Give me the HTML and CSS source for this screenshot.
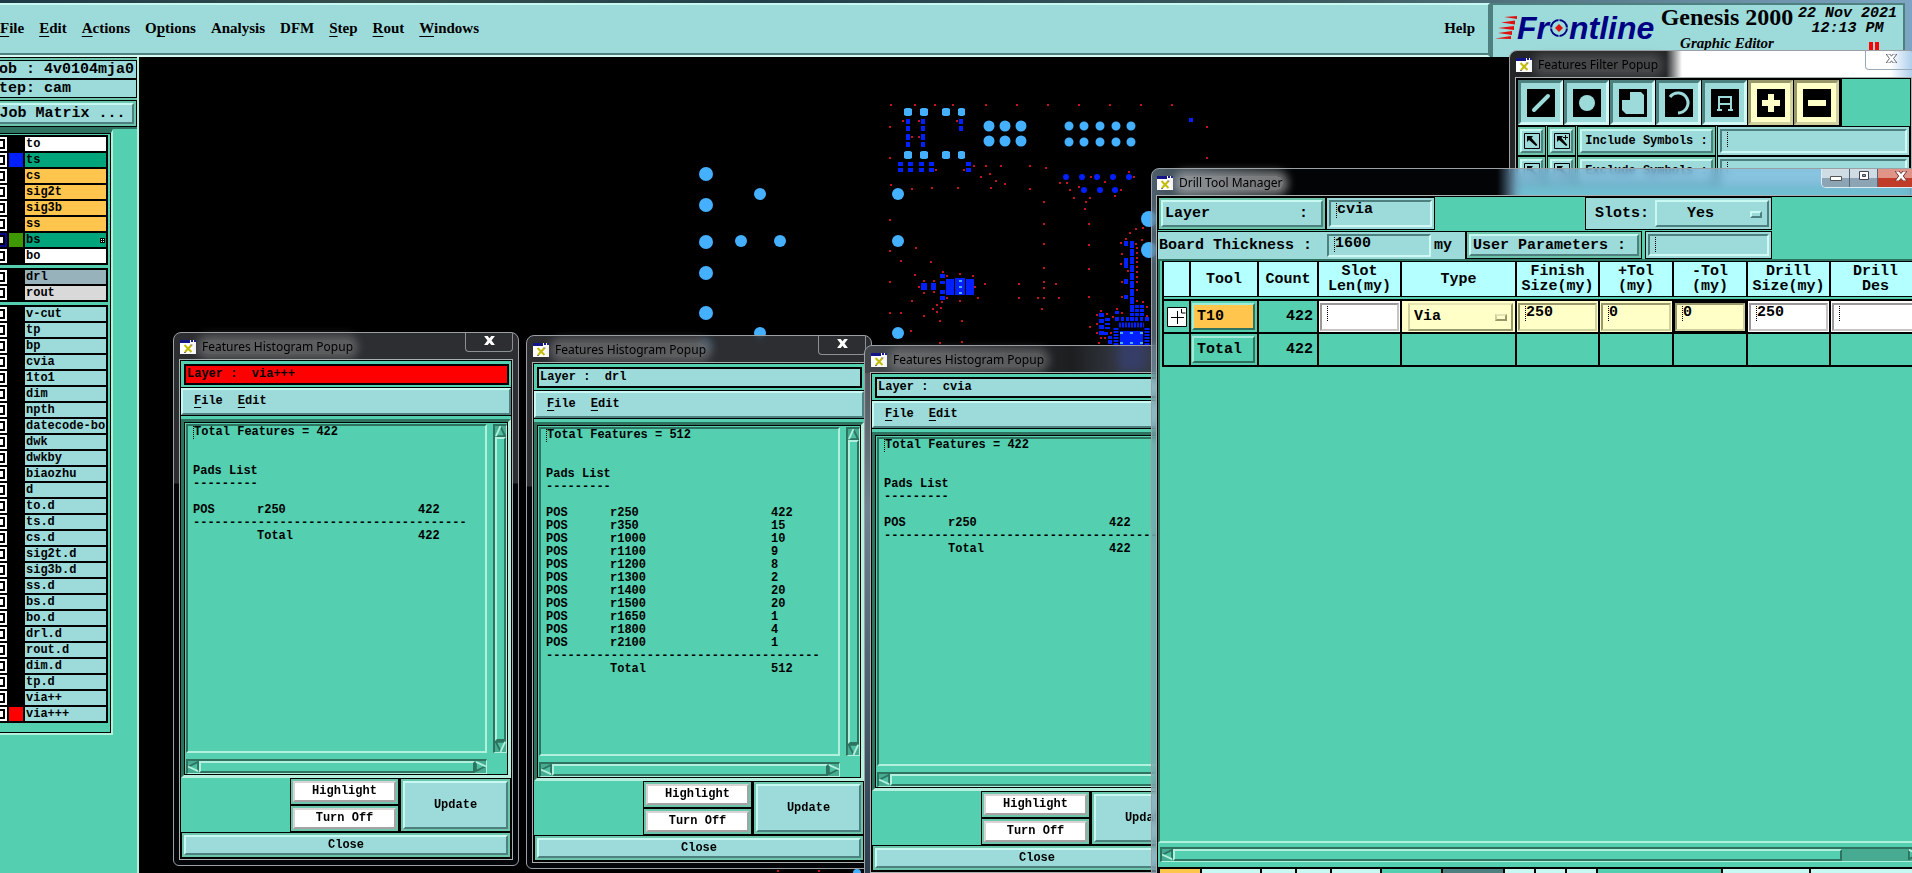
FILE: index.html
```html
<!DOCTYPE html>
<html lang="en">
<head>
    <meta charset="UTF-8">
    <title>Genesis 2000 - Graphic Editor</title>
    <link rel="stylesheet" href="styles.css">
</head>
<body>
    <!-- shared symbols -->
    <svg class="defs" aria-hidden="true">
        <symbol id="xicon" viewBox="0 0 16 14">
            <rect width="16" height="14" fill="#fff"/>
            <rect width="10" height="3" fill="#15158a"/>
            <rect x="11" width="2" height="2" fill="#15158a"/>
            <rect x="14" width="2" height="2" fill="#15158a"/>
            <path d="M4.500 5l7 7M11.500 5L5 12" fill="none" stroke="#c4bc08" stroke-width="2"/>
            <path d="M10.500 5h2M4 12.500h2" stroke="#777" stroke-width="1"/>
        </symbol>
        <symbol id="xclose" viewBox="0 0 12 10">
            <path d="M0 0h4l2 2.500 2-2.500h4L8.300 5 12 10H8L6 7.500 4 10H0l3.700-5z"/>
        </symbol>
        <symbol id="arrow" viewBox="0 0 12 12">
            <path d="M6 0L11 11H1z" fill="#4fbfa1"/>
            <path d="M1 11h10L6 1" fill="none" stroke="#2d7360" stroke-width="2"/>
            <path d="M6 0L1 11" stroke="#b0f0dc" stroke-width="2"/>
        </symbol>
        <symbol id="pick" viewBox="0 0 16 16">
            <path d="M.5.5h15v15H.5z" fill="none" stroke="#000"/>
            <path d="M3 3h6L7.500 5l6 7-1.500 1-7-6-2 2z"/>
        </symbol>
    </svg>

    <header class="topbar">
        <nav class="menubar">
            <button><u>F</u>ile</button>
            <button><u>E</u>dit</button>
            <button><u>A</u>ctions</button>
            <button>O<u>p</u>tions</button>
            <button>Analysis</button>
            <button>DFM</button>
            <button><u>S</u>tep</button>
            <button><u>R</u>out</button>
            <button><u>W</u>indows</button>
            <button class="help">Help</button>
        </nav>
        <div class="brand">
            <div class="logo">
                <svg class="speed" width="22" height="24" viewBox="0 0 22 24" fill="#e01010">
                    <path d="M9 1L22 0v3zM6 6.500L20 4.500v4zM3 12L19 10v4zM3 17L17 15v4zM0 22.500L16 20v3z"/>
                </svg>
                <span>Fr</span>
                <svg width="20" height="20" viewBox="0 0 20 20">
                    <circle cx="10" cy="10" r="8" fill="none" stroke="#000084" stroke-width="2"/>
                    <path d="M10 6l4 4-4 4-4-4z" fill="#e01010"/>
                    <path d="M10 0v4M10 16v4M0 10h3M17 10h3" stroke="#9ddbdb"/>
                </svg>
                <span>ntline</span>
            </div>
            <div class="product">
                <h1>Genesis 2000</h1>
                <p>Graphic Editor</p>
            </div>
            <div class="clock">
                <p>22 Nov 2021</p>
                <p>12:13 PM</p>
                <div class="pause"></div>
            </div>
        </div>
    </header>

    <main class="workspace">
        <aside class="sidebar">
            <div class="job">
                <p class="job-line">Job : 4v0104mja0</p>
                <p class="job-line">Step: cam</p>
                <div class="cell"><button class="btn">Job Matrix ...</button></div>
            </div>
            <div class="layers">
                <div class="group">
                    <label class="row"><input type="checkbox"><i></i><span class="white">to</span></label>
                    <label class="row"><input type="checkbox"><i class="blue"></i><span class="green">ts</span></label>
                    <label class="row"><input type="checkbox"><i></i><span class="orange">cs</span></label>
                    <label class="row"><input type="checkbox"><i></i><span class="orange">sig2t</span></label>
                    <label class="row"><input type="checkbox"><i></i><span class="orange">sig3b</span></label>
                    <label class="row"><input type="checkbox"><i></i><span class="orange">ss</span></label>
                    <label class="row"><input type="checkbox" checked><i class="olive"></i><span class="green">bs<svg class="grid-mark" viewBox="0 0 5 5"><path d="M0 0h5v5H0z"/><path d="M1 1h1v1H1zM3 1h1v1H3zM1 3h1v1H1zM3 3h1v1H3z" fill="#fff"/></svg></span></label>
                    <label class="row"><input type="checkbox"><i></i><span class="white">bo</span></label>
                </div>
                <div class="group">
                    <label class="row"><input type="checkbox"><i></i><span class="slate">drl</span></label>
                    <label class="row"><input type="checkbox"><i></i><span class="grey">rout</span></label>
                </div>
                <div class="group">
                    <label class="row"><input type="checkbox"><i></i><span>v-cut</span></label>
                    <label class="row"><input type="checkbox"><i></i><span>tp</span></label>
                    <label class="row"><input type="checkbox"><i></i><span>bp</span></label>
                    <label class="row"><input type="checkbox"><i></i><span>cvia</span></label>
                    <label class="row"><input type="checkbox"><i></i><span>1to1</span></label>
                    <label class="row"><input type="checkbox"><i></i><span>dim</span></label>
                    <label class="row"><input type="checkbox"><i></i><span>npth</span></label>
                    <label class="row"><input type="checkbox"><i></i><span>datecode-bo</span></label>
                    <label class="row"><input type="checkbox"><i></i><span>dwk</span></label>
                    <label class="row"><input type="checkbox"><i></i><span>dwkby</span></label>
                    <label class="row"><input type="checkbox"><i></i><span>biaozhu</span></label>
                    <label class="row"><input type="checkbox"><i></i><span>d</span></label>
                    <label class="row"><input type="checkbox"><i></i><span>to.d</span></label>
                    <label class="row"><input type="checkbox"><i></i><span>ts.d</span></label>
                    <label class="row"><input type="checkbox"><i></i><span>cs.d</span></label>
                    <label class="row"><input type="checkbox"><i></i><span>sig2t.d</span></label>
                    <label class="row"><input type="checkbox"><i></i><span>sig3b.d</span></label>
                    <label class="row"><input type="checkbox"><i></i><span>ss.d</span></label>
                    <label class="row"><input type="checkbox"><i></i><span>bs.d</span></label>
                    <label class="row"><input type="checkbox"><i></i><span>bo.d</span></label>
                    <label class="row"><input type="checkbox"><i></i><span>drl.d</span></label>
                    <label class="row"><input type="checkbox"><i></i><span>rout.d</span></label>
                    <label class="row"><input type="checkbox"><i></i><span>dim.d</span></label>
                    <label class="row"><input type="checkbox"><i></i><span>tp.d</span></label>
                    <label class="row"><input type="checkbox"><i></i><span>via++</span></label>
                    <label class="row"><input type="checkbox"><i class="red"></i><span>via+++</span></label>
                </div>
            </div>
        </aside>

        <svg class="board">
            <g transform="translate(-139 -57)">
                <!-- large holes -->
                <g fill="#44b0ff">
                    <circle cx="706" cy="174" r="7"/><circle cx="706" cy="205" r="7"/><circle cx="706" cy="242" r="7"/>
                    <circle cx="706" cy="273" r="7"/><circle cx="706" cy="313" r="7"/><circle cx="706" cy="345" r="7"/>
                    <circle cx="760" cy="194" r="6"/><circle cx="741" cy="241" r="6"/><circle cx="780" cy="241" r="6"/>
                    <circle cx="760" cy="333" r="6"/><circle cx="898" cy="194" r="6"/><circle cx="898" cy="241" r="6"/>
                    <circle cx="898" cy="333" r="6"/><circle cx="1149" cy="219" r="8"/><circle cx="1149" cy="250" r="8"/>
                    <circle cx="857" cy="873" r="4"/>
                </g>
                <path fill="#44b0ff" d="M904 109l2-1h4l2 1v6l-2 1h-4l-2-1zM920 109l2-1h4l2 1v6l-2 1h-4l-2-1zM942 109l2-1h4l2 1v6l-2 1h-4l-2-1zM958 109l2-1h3l2 1v6l-2 1h-3l-2-1zM904 152l2-1h4l2 1v6l-2 1h-4l-2-1zM920 152l2-1h4l2 1v6l-2 1h-4l-2-1zM942 152l2-1h4l2 1v6l-2 1h-4l-2-1zM958 152l2-1h3l2 1v6l-2 1h-3l-2-1z"/>
                <g stroke="#44b0ff" stroke-linecap="round">
                    <path stroke-width="11" d="M989 126h0M1005 126h0M1021 126h0M989 141h0M1005 141h0M1021 141h0"/>
                    <path stroke-width="9" d="M1069 126h0M1084 126h0M1100 126h0M1116 126h0M1131 126h0M1069 142h0M1084 142h0M1100 142h0M1116 142h0M1131 142h0"/>
                </g>
                <!-- slots and pads -->
                <g stroke="#0020ff" stroke-linecap="round" stroke-width="6">
                    <path d="M1066 177h0M1082 177h0M1097 177h0M1113 177h0M1129 177h0M1084 190h0M1100 190h0M1115 190h0"/>
                </g>
                <g fill="#0020ff">
                    <path d="M906 119h4v5h-4zM906 126h4v5h-4zM906 134h4v6h-4zM906 142h4v5h-4zM921 119h4v5h-4zM921 126h4v5h-4zM921 134h4v6h-4zM921 142h4v5h-4zM959 119h4v5h-4zM959 126h4v5h-4z"/>
                    <path d="M898 162h5v4h-5zM908 162h5v4h-5zM919 162h5v4h-5zM929 162h5v4h-5zM966 162h5v4h-5zM898 168h5v4h-5zM908 168h5v4h-5zM919 168h5v4h-5zM929 168h5v4h-5zM966 168h5v4h-5zM1189 118h4v4h-4z"/>
                    <path d="M921 283h6v7h-6zM931 283h5v7h-5zM940 274h5v4h-5zM940 281h5v3h-5zM940 290h5v4h-5zM940 296h5v4h-5zM946 279h8v16h-8zM955 278h10v17h-10zM966 279h8v16h-8z"/>
                    <path d="M1124 241h4v5h-4zM1124 258h4v10h-4zM1124 279h4v5h-4zM1124 295h4v4h-4z"/>
                    <path d="M1135 305h4v3h-4zM1140 305h4v3h-4zM1135 309h4v3h-4zM1140 309h4v3h-4zM1135 313h4v3h-4zM1140 313h4v3h-4zM1115 311h4v3h-4z"/>
                    <path d="M1115 317h4v4h-4zM1121 317h3v4h-3zM1126 317h3v4h-3zM1130 317h4v4h-4zM1135 317h3v4h-3zM1140 317h3v4h-3zM1145 317h4v4h-4z"/>
                    <path d="M1099 313h5v4h-5zM1099 319h5v4h-5zM1099 325h5v4h-5zM1099 331h5v4h-5zM1105 318h5v3h-5zM1105 323h5v2h-5zM1105 327h5v2h-5zM1108 336h4v3h-4zM1108 340h4v4h-4zM1104 332h4v3h-4z"/>
                    <path d="M1120 331h23v40h-23z"/>
                </g>
                <g stroke="#0020ff" fill="none">
                    <path stroke-width="4" stroke-dasharray="7 1" d="M1132 241v75"/>
                    <path stroke-width="5" stroke-dasharray="2 1" d="M1119 325h25"/>
                    <path stroke-width="5" stroke-dasharray="2 1" d="M1116 328v40M1147 328v40"/>
                </g>
                <path fill="#44b0ff" d="M959 280h3v2h-3zM959 286h3v2h-3zM959 292h3v2h-3zM1120 332h3v2h-3zM1130 332h3v2h-3zM1140 332h3v2h-3zM1120 342h3v2h-3zM1130 342h3v2h-3zM1140 342h3v2h-3z"/>
                <!-- vias -->
                <path stroke="#c81420" stroke-width="2" d="M890 105h2M914 105h2M934 105h2M952 105h2M985 105h2M1016 105h2M1047 105h2M1078 105h2M1109 105h2M1140 105h2M1171 105h2
                    M902 121h2M918 121h2M956 121h2M889 127h2M911 137h2M918 137h2M1206 127h2M889 158h2M1206 158h2M935 170h2M963 170h2M973 166h2M985 166h2M1000 166h2M1029 166h2M1045 168h2
                    M980 177h2M989 174h2M995 181h2M1004 184h2M990 188h2M957 188h2M931 188h2M911 189h2M890 185h2M1029 189h2M889 220h2M1043 202h2M1043 224h2M1043 244h2M1043 268h2
                    M889 251h2M915 248h2M900 261h2M930 262h2M914 275h2M889 282h2M942 272h2M959 274h2M972 276h2M946 276h2M923 281h2M933 281h2M918 287h2M974 287h2M984 284h2M1018 284h2M1043 282h2M1055 284h2M1043 288h2
                    M977 298h2M1018 298h2M1037 298h2M1043 298h2M1058 298h2M1041 309h2M911 301h2M923 293h2M933 292h2M946 298h2M959 301h2M941 302h2M936 305h2M940 308h2M932 309h2M936 312h2M923 316h2M889 313h2M900 313h2
                    M939 321h2M961 321h2M910 331h2M939 343h2M961 342h2M1128 172h2M1133 177h2M1090 177h2M1059 183h2M1066 183h2M1104 182h2M1069 190h2M1078 187h2M1120 190h2M1073 198h2M1089 198h2M1114 196h2M1085 202h2M1084 209h2
                    M1088 224h2M1088 245h2M1088 269h2M1088 297h2M1142 228h2M1135 229h2M1129 233h2M1120 243h2M1125 239h2M1135 244h2M1141 240h2M1136 248h2M1121 254h2M1136 253h2M1136 258h2M1136 262h2M1120 264h2M1127 271h2M1136 267h2
                    M1136 272h2M1136 277h2M1121 282h2M1136 282h2M1136 290h2M1121 297h2M1136 301h2M1142 302h2M1146 307h2M1116 309h2M1121 313h2M1100 311h2M1096 315h2M1106 314h2M1112 317h2M1096 324h2M1089 327h2M1096 333h2
                    M1100 338h2M1104 338h2M1110 333h2M1098 343h2M1146 316h2M777 871h2M818 871h2"/>
            </g>
        </svg>
    </main>

    <section class="window popup popup-via">
        <div class="titlebar">
            <svg class="xicon"><use href="#xicon"/></svg><h2>Features Histogram Popup</h2>
            <button class="win-close" aria-label="Close window"><svg><use href="#xclose"/></svg></button>
        </div>
        <div class="content">
            <p class="layer-name active">Layer :&nbsp; via+++</p>
            <nav class="popup-menu"><button><u>F</u>ile</button><button><u>E</u>dit</button></nav>
            <div class="scroll-area">
                <div class="text-pane">
                    <p class="first">Total Features = 422</p>
                    <h3>Pads List</h3>
                    <p>---------</p>
                    <table>
                        <tr><td>POS</td><td>r250</td><td>422</td></tr>
                        <tr><td colspan="3">--------------------------------------</td></tr>
                        <tr><td></td><td>Total</td><td>422</td></tr>
                    </table>
                </div>
                <div class="vscroll"><svg><use href="#arrow"/></svg><div class="thumb"></div><svg class="down"><use href="#arrow"/></svg></div>
                <div class="hscroll"><svg class="left"><use href="#arrow"/></svg><div class="thumb"></div><svg class="right"><use href="#arrow"/></svg></div>
            </div>
            <div class="actions">
                <div class="pair">
                    <div class="cell"><button class="btn plain">Highlight</button></div>
                    <div class="cell"><button class="btn plain">Turn Off</button></div>
                </div>
                <div class="cell update"><button class="btn">Update</button></div>
            </div>
            <div class="cell close-cell"><button class="btn">Close</button></div>
        </div>
    </section>

    <section class="window popup popup-drl">
        <div class="titlebar">
            <svg class="xicon"><use href="#xicon"/></svg><h2>Features Histogram Popup</h2>
            <button class="win-close" aria-label="Close window"><svg><use href="#xclose"/></svg></button>
        </div>
        <div class="content">
            <p class="layer-name">Layer :&nbsp; drl</p>
            <nav class="popup-menu"><button><u>F</u>ile</button><button><u>E</u>dit</button></nav>
            <div class="scroll-area">
                <div class="text-pane">
                    <p class="first">Total Features = 512</p>
                    <h3>Pads List</h3>
                    <p>---------</p>
                    <table>
                        <tr><td>POS</td><td>r250</td><td>422</td></tr>
                        <tr><td>POS</td><td>r350</td><td>15</td></tr>
                        <tr><td>POS</td><td>r1000</td><td>10</td></tr>
                        <tr><td>POS</td><td>r1100</td><td>9</td></tr>
                        <tr><td>POS</td><td>r1200</td><td>8</td></tr>
                        <tr><td>POS</td><td>r1300</td><td>2</td></tr>
                        <tr><td>POS</td><td>r1400</td><td>20</td></tr>
                        <tr><td>POS</td><td>r1500</td><td>20</td></tr>
                        <tr><td>POS</td><td>r1650</td><td>1</td></tr>
                        <tr><td>POS</td><td>r1800</td><td>4</td></tr>
                        <tr><td>POS</td><td>r2100</td><td>1</td></tr>
                        <tr><td colspan="3">--------------------------------------</td></tr>
                        <tr><td></td><td>Total</td><td>512</td></tr>
                    </table>
                </div>
                <div class="vscroll"><svg><use href="#arrow"/></svg><div class="thumb"></div><svg class="down"><use href="#arrow"/></svg></div>
                <div class="hscroll"><svg class="left"><use href="#arrow"/></svg><div class="thumb"></div><svg class="right"><use href="#arrow"/></svg></div>
            </div>
            <div class="actions">
                <div class="pair">
                    <div class="cell"><button class="btn plain">Highlight</button></div>
                    <div class="cell"><button class="btn plain">Turn Off</button></div>
                </div>
                <div class="cell update"><button class="btn">Update</button></div>
            </div>
            <div class="cell close-cell"><button class="btn">Close</button></div>
        </div>
    </section>

    <section class="window popup popup-cvia">
        <div class="titlebar">
            <svg class="xicon"><use href="#xicon"/></svg><h2>Features Histogram Popup</h2>
            <button class="win-close" aria-label="Close window"><svg><use href="#xclose"/></svg></button>
        </div>
        <div class="content">
            <p class="layer-name">Layer :&nbsp; cvia</p>
            <nav class="popup-menu"><button><u>F</u>ile</button><button><u>E</u>dit</button></nav>
            <div class="scroll-area">
                <div class="text-pane">
                    <p class="first">Total Features = 422</p>
                    <h3>Pads List</h3>
                    <p>---------</p>
                    <table>
                        <tr><td>POS</td><td>r250</td><td>422</td></tr>
                        <tr><td colspan="3">--------------------------------------</td></tr>
                        <tr><td></td><td>Total</td><td>422</td></tr>
                    </table>
                </div>
                <div class="vscroll"><svg><use href="#arrow"/></svg><div class="thumb"></div><svg class="down"><use href="#arrow"/></svg></div>
                <div class="hscroll"><svg class="left"><use href="#arrow"/></svg><div class="thumb"></div><svg class="right"><use href="#arrow"/></svg></div>
            </div>
            <div class="actions">
                <div class="pair">
                    <div class="cell"><button class="btn plain">Highlight</button></div>
                    <div class="cell"><button class="btn plain">Turn Off</button></div>
                </div>
                <div class="cell update"><button class="btn">Update</button></div>
            </div>
            <div class="cell close-cell"><button class="btn">Close</button></div>
        </div>
    </section>

    <section class="window filter">
        <div class="titlebar">
            <svg class="xicon"><use href="#xicon"/></svg><h2>Features Filter Popup</h2>
            <button class="win-close" aria-label="Close window"><svg viewBox="-1 -1 14 12"><use href="#xclose" width="12" height="10"/></svg></button>
        </div>
        <div class="content">
            <div class="toolbar">
                <button aria-label="Lines"><svg viewBox="0 0 28 28"><path d="M7 21L21 7" stroke="#9ddbdb" stroke-width="4" stroke-linecap="round"/></svg></button>
                <button aria-label="Pads"><svg viewBox="0 0 28 28"><circle cx="14" cy="14" r="8" fill="#9ddbdb"/></svg></button>
                <button aria-label="Surfaces"><svg viewBox="0 0 28 28"><path d="M11 3h11l3 3v19H7l-4-4V11h8z" fill="#9ddbdb"/></svg></button>
                <button aria-label="Arcs"><svg viewBox="0 0 28 28"><path d="M5 8A10 10 0 1 1 13 24" fill="none" stroke="#9ddbdb" stroke-width="3"/></svg></button>
                <button aria-label="Text"><svg viewBox="0 0 28 28"><path d="M6 21h5M17 21h5M8 22V8h12v14M8 15h12" fill="none" stroke="#9ddbdb" stroke-width="2"/></svg></button>
                <button class="cream" aria-label="Positive"><svg viewBox="0 0 28 28"><path d="M14 5v18M5 14h18" stroke="#ffffc8" stroke-width="6"/></svg></button>
                <button class="cream" aria-label="Negative"><svg viewBox="0 0 28 28"><path d="M5 14h18" stroke="#ffffc8" stroke-width="6"/></svg></button>
            </div>
            <div class="symbols">
                <div class="cell"><button class="btn" aria-label="Pick"><svg><use href="#pick"/></svg></button></div>
                <div class="cell"><button class="btn" aria-label="Pick and add"><svg><use href="#pick"/><path d="M9 4.500h5M11.500 2v5" stroke="#000"/></svg></button></div>
                <div class="cell name"><label class="btn" for="include">Include Symbols :</label></div>
                <div class="entry"><input id="include" type="text" class="field"></div>
            </div>
            <div class="symbols">
                <div class="cell"><button class="btn" aria-label="Pick"><svg><use href="#pick"/></svg></button></div>
                <div class="cell"><button class="btn" aria-label="Pick and add"><svg><use href="#pick"/></svg></button></div>
                <div class="cell name"><label class="btn" for="exclude">Exclude Symbols :</label></div>
                <div class="entry"><input id="exclude" type="text" class="field"></div>
            </div>
        </div>
    </section>

    <section class="window drill">
        <div class="titlebar">
            <svg class="xicon"><use href="#xicon"/></svg><h2>Drill Tool Manager</h2>
            <div class="win-buttons">
                <button aria-label="Minimize"><svg viewBox="0 0 14 12"><path d="M1.500 6.500h11v4h-11z" fill="#fff" stroke="#555"/></svg></button>
                <button aria-label="Maximize"><svg viewBox="0 0 14 12"><path d="M2.500 1.500h9v8h-9z" fill="#fff" stroke="#445"/><path d="M5.500 4.500h3v2h-3z" fill="#8ab" stroke="#445"/></svg></button>
                <button class="quit" aria-label="Close"><svg viewBox="-1 -1 14 12"><use href="#xclose" width="12" height="10"/></svg></button>
            </div>
        </div>
        <div class="content">
            <div class="form-row">
                <div class="cell layer-label"><label class="btn" for="layer"><span>Layer</span><span>:</span></label></div>
                <div class="entry layer-entry"><input id="layer" type="text" class="field" value="cvia"></div>
                <div class="slots">
                    <label for="slots">Slots:</label>
                    <div class="option"><select id="slots"><option>Yes</option><option>No</option></select><i></i></div>
                </div>
            </div>
            <div class="form-row">
                <div class="thickness">
                    <label for="thickness">Board Thickness :</label>
                    <input id="thickness" type="text" class="field" value="1600">
                    <span>my</span>
                </div>
                <div class="cell params"><label class="btn" for="params">User Parameters :</label></div>
                <div class="entry params-entry"><input id="params" type="text" class="field"></div>
            </div>
            <div class="table-area">
                <table class="tools">
                    <colgroup>
                        <col class="c-mark"><col class="c-tool"><col class="c-count"><col class="c-size"><col class="c-type">
                        <col class="c-size"><col class="c-tol"><col class="c-tol"><col class="c-size"><col class="c-last">
                    </colgroup>
                    <thead>
                        <tr>
                            <th></th><th>Tool</th><th>Count</th><th>Slot<br>Len(my)</th><th>Type</th>
                            <th>Finish<br>Size(my)</th><th>+Tol<br>(my)</th><th>-Tol<br>(my)</th><th>Drill<br>Size(my)</th><th>Drill<br>Des</th>
                        </tr>
                    </thead>
                    <tbody>
                        <tr>
                            <td><svg class="plus" viewBox="0 0 20 20"><path d="M.5.5h19v19H.5z" fill="#fff" stroke="#000"/><path d="M10.500 4v13M4 10.500h13M14.500 2v4h4" fill="none" stroke="#000"/></svg></td>
                            <td><button class="btn tool orange">T10</button></td>
                            <td class="num">422</td>
                            <td class="white"><input type="text" class="field" aria-label="Slot length"></td>
                            <td class="cream"><div class="option"><select aria-label="Type"><option>Via</option><option>Plated</option></select><i></i></div></td>
                            <td class="cream"><input type="text" class="field" value="250" aria-label="Finish size"></td>
                            <td class="cream"><input type="text" class="field" value="0" aria-label="Plus tolerance"></td>
                            <td class="cream focus"><input type="text" class="field" value="0" aria-label="Minus tolerance"></td>
                            <td class="white"><input type="text" class="field" value="250" aria-label="Drill size"></td>
                            <td class="white"><input type="text" class="field" aria-label="Drill designator"></td>
                        </tr>
                        <tr>
                            <td></td>
                            <td><button class="btn tool">Total</button></td>
                            <td class="num">422</td>
                            <td></td><td></td><td></td><td></td><td></td><td></td><td></td>
                        </tr>
                    </tbody>
                </table>
            </div>
            <div class="hscroll wide"><svg class="left"><use href="#arrow"/></svg><div class="thumb"></div><svg class="right"><use href="#arrow"/></svg></div>
            <div class="footer">
                <span class="f-orange"></span><span class="f-60"></span><span class="f-34"></span><span class="f-34"></span><span class="f-48"></span>
                <span class="f-gap"></span><span class="f-sunk"></span><span></span><span></span><span></span>
                <span class="f-gap2"></span><span class="f-86"></span><span class="f-rest"></span>
            </div>
        </div>
    </section>
</body>
</html>
```
FILE: styles.css
```css
* {
    box-sizing: border-box;
    margin: 0;
    padding: 0;
}

body {
    height: 100vh;
    display: flex;
    flex-direction: column;
    position: relative;
    overflow: hidden;
    background: #000;
    color: #000;
    font: bold 12px/13px "Liberation Mono", monospace;
}

button, input, select {
    font: inherit;
    color: inherit;
    border: 0;
    border-radius: 0;
    background: none;
}

u {
    text-underline-offset: 3px;
    text-decoration-thickness: 1px;
}

.defs {
    position: absolute;
    width: 0;
    height: 0;
}

/* raised button with a thin black cell round it */
.cell {
    display: flex;
    border: 1px solid #000;
    padding: 2px;
    background: #6cc6ac;
}

.btn {
    flex: 1;
    display: flex;
    align-items: center;
    justify-content: center;
    background: #9ddbdb;
    border: 2px solid;
    border-color: #c8f8f2 #4f8080 #4f8080 #c8f8f2;
}

.btn.plain {
    background: #fff;
    border-color: #d8d4d4 #a8a2a2 #a8a2a2 #d8d4d4;
}

.entry {
    display: flex;
    border: 1px solid #000;
    padding: 2px;
    background: #9ddbdb;
}

/* sunken text box with a dotted insertion mark */
.field {
    width: 100%;
    min-width: 0;
    height: 100%;
    padding: 0 2px 8px 6px;
    border: 2px solid;
    border-color: #4f8080 #d0f8f4 #d0f8f4 #4f8080;
    background: repeating-linear-gradient(#000 0 1px, transparent 1px 2px) 5px 1px / 1px 15px no-repeat;
    outline: 0;
}

.orange { background: #ffc54c !important; }
.white { background: #fff !important; }
.green { background: #00a57c !important; }
.slate { background: #98b2bc !important; }
.grey { background: #d9d9d9 !important; }
.blue { background: #0020ff !important; }
.olive { background: #409800 !important; }
.red { background: #f00 !important; }

/* ---------- top bar ---------- */
.topbar {
    display: flex;
    height: 57px;
    padding: 3px 7px 0 0;
    background: linear-gradient(90deg, #1e3a48, #36504e 20%, #22404c 40%, #3e5c60 70%, #7ea6c4);
    font: bold 15px/18px "Liberation Serif", serif;
}

.menubar {
    flex: 1;
    display: flex;
    align-items: center;
    gap: 15px;
    padding: 0 13px 4px 0;
    background: #9ddbdb;
    border: solid;
    border-width: 2px 2px 2px 0;
    border-color: #c8f8f2 #4f8080 #d8f8f4;
    box-shadow: inset 0 -2px #4f8080;
}

.menubar .help {
    margin-left: auto;
}

.brand {
    width: 415px;
    display: flex;
    align-items: flex-start;
    background: #9ddbdb;
    border-left: 3px solid #4f8080;
    border-right: 2px solid #4f8080;
    border-top: 2px solid #4f8080;
    overflow: hidden;
}

.logo {
    display: flex;
    align-items: center;
    padding: 5px 0 0 2px;
    width: 165px;
    font: italic bold 32px/36px "Liberation Sans", sans-serif;
    color: #000084;
}

.product {
    width: 138px;
    white-space: nowrap;
    text-align: center;
}

.product h1 {
    font-size: 24px;
    line-height: 24px;
}

.product p {
    font-style: italic;
    padding-top: 5px;
}

.clock {
    width: 103px;
    padding-top: 1px;
    font: italic bold 15px/15px "Liberation Mono", monospace;
    text-align: center;
}

.pause {
    width: 10px;
    height: 8px;
    margin: 6px 0 0 73px;
    border: solid #f00;
    border-width: 0 4px;
}

/* ---------- layer list ---------- */
.workspace {
    flex: 1;
    display: flex;
    min-height: 0;
}

.sidebar {
    width: 151px;
    margin-left: -12px;
    flex: none;
    background: #54cfaf;
    border-right: 2px solid #b0f0dc;
}

.job {
    padding: 2px 0 0;
    background: #6cc6ac;
    border-top: 1px solid #000;
    border-bottom: 2px solid #2d7360;
    font-size: 15px;
    line-height: 17px;
}

.job-line {
    height: 19px;
    padding-left: 1px;
    background: #9ddbdb;
    border: 1px solid #000;
}

.job .cell {
    height: 27px;
    margin-top: 2px;
}

.layers {
    width: 125px;
    padding: 2px 2px 7px 0;
    border-top: 4px solid #2d7360;
    border-right: 2px solid #b0f0dc;
    border-bottom: 2px solid #b0f0dc;
    box-shadow: inset -1px -1px #000, inset 0 1px #000;
}

.group {
    width: 120px;
    margin-bottom: 3px;
    padding: 2px 2px 0 5px;
    background: #000;
}

.row {
    display: flex;
    height: 14px;
    margin-bottom: 2px;
    line-height: 14px;
    white-space: nowrap;
}

.group .row:last-child {
    margin-bottom: 0;
    height: 16px;
    border-bottom: 2px solid #000;
}

.row input {
    appearance: none;
    flex: none;
    width: 14px;
    height: 14px;
    background: #fff;
    border: 2px solid #fff;
    box-shadow: inset 0 0 0 2px #000;
}

.row input:checked {
    border-color: #0a0a90;
}

.row i {
    flex: none;
    width: 14px;
    height: 14px;
    margin: 0 2px;
}

.row span {
    flex: 1;
    display: flex;
    align-items: center;
    justify-content: space-between;
    padding-left: 1px;
    background: #9ddbdb;
}

.grid-mark {
    width: 5px;
    height: 5px;
    margin-right: 1px;
}

.board {
    flex: 1;
    height: 100%;
    min-width: 0;
}

/* ---------- windows ---------- */
.window {
    position: absolute;
    display: flex;
    flex-direction: column;
    padding: 0 6px 6px;
    border: 1px solid #9aa0a4;
    border-radius: 8px 8px 6px 6px;
    background: linear-gradient(rgba(52, 54, 58, .85) 0 150px, rgba(4, 6, 10, .9) 151px);
    backdrop-filter: blur(4px);
}

.titlebar {
    display: flex;
    height: 27px;
    align-items: center;
    gap: 6px;
}

.xicon {
    width: 16px;
    height: 14px;
}

.titlebar h2 {
    font: 12px/14px "Noto Sans", sans-serif;
    border-radius: 6px;
    background: rgba(150, 150, 150, .45);
    box-shadow: 0 0 8px 5px rgba(150, 150, 150, .45);
}

.win-close {
    align-self: flex-start;
    width: 48px;
    height: 19px;
    margin: 0 -1px 0 auto;
    border: 1px solid #8c9094;
    border-top: 0;
    border-radius: 0 0 4px 4px;
}

.win-close svg {
    width: 11px;
    height: 9px;
    fill: #fff;
}

.content {
    display: flex;
    flex-direction: column;
    background: #54cfaf;
    border: 1px solid #000;
    outline: 1px solid #a8b0b0;
}

.popup {
    width: 346px;
}

.popup-via { left: 173px; top: 332px; }
.popup-drl { left: 526px; top: 335px; }

.popup-cvia {
    left: 864px;
    top: 345px;
    background: linear-gradient(rgba(90, 98, 104, .8) 0 28px, #6e8490 160px, #2a3c4c);
}

.popup-cvia .titlebar {
    margin: 0 -6px;
    padding: 0 6px;
    border-radius: 8px 8px 0 0;
    background: linear-gradient(90deg, #44484c 0, #1c1e20 60%, rgba(10, 10, 30, .3) 75%);
}

.layer-name {
    height: 21px;
    margin: 3px 2px 3px 3px;
    padding-left: 1px;
    line-height: 17px;
    background: #9ddbdb;
    border: 2px solid #000;
}

.layer-name.active {
    background: #f00;
}

.popup-menu {
    display: flex;
    gap: 15px;
    height: 27px;
    padding-left: 11px;
    background: #9ddbdb;
    border: 2px solid;
    border-color: #c8f8f2 #4f8080 #4f8080 #c8f8f2;
    outline: 1px solid #000;
}

.scroll-area {
    display: grid;
    grid-template-columns: 301px 14px;
    grid-template-rows: 329px 15px;
    gap: 6px;
    margin-top: 4px;
    padding: 2px 2px 1px 2px;
    border: 3px solid;
    border-color: #2d7360 #b8f0e0 #b8f0e0 #2d7360;
    box-shadow: inset 0 0 0 1px #000;
}

.text-pane {
    padding: 0 5px;
    border: 2px solid;
    border-color: #2d7360 #b0f0dc #b0f0dc #2d7360;
}

.text-pane .first {
    border-left: 1px dotted #000;
}

.text-pane h3 {
    font: inherit;
    margin-top: 26px;
}

.text-pane table {
    margin-top: 13px;
    border-spacing: 0;
    table-layout: fixed;
    width: 280px;
}

.text-pane td { width: 55px; }
.text-pane td:first-child { width: 64px; }
.text-pane td:nth-child(2) { width: 161px; }

.vscroll, .hscroll {
    display: flex;
    background: #46ab91;
    border: solid;
    border-width: 2px 1px 1px 2px;
    border-color: #2d7360 #b0f0dc #b0f0dc #2d7360;
}

.vscroll {
    flex-direction: column;
}

.vscroll svg, .hscroll svg {
    flex: none;
    width: 11px;
    height: 11px;
}

.down { transform: rotate(180deg); }
.left { transform: rotate(-90deg); }
.right { transform: rotate(90deg); }

.thumb {
    flex: 1;
    background: #54cfaf;
    border: 2px solid;
    border-color: #b0f0dc #2d7360 #2d7360 #b0f0dc;
}

.actions {
    display: flex;
    justify-content: flex-end;
}

.pair {
    width: 109px;
}

.pair .cell {
    height: 27px;
}

.update {
    width: 112px;
    border-left-width: 2px;
}

.close-cell {
    height: 26px;
}

/* ---------- features filter ---------- */
.filter {
    left: 1509px;
    right: -6px;
    top: 50px;
    height: 260px;
    background: linear-gradient(90deg, #242628 0 156px, #fff 172px 380px, #9cc4e8);
}

.filter .titlebar h2 {
    background: rgba(150, 150, 150, .3);
    box-shadow: 0 0 8px 5px rgba(150, 150, 150, .3);
}

.filter .win-close {
    width: 52px;
    margin-right: -6px;
    border-color: #9ab;
}

.filter .win-close svg {
    width: 13px;
    height: 11px;
    stroke: #556;
}

.filter .content {
    flex: 1;
}

.toolbar {
    display: flex;
    gap: 1px;
    width: 325px;
    padding: 1px 1px 1px;
    background: #000;
}

.toolbar button {
    width: 45px;
    height: 45px;
    display: flex;
    align-items: center;
    justify-content: center;
    background: #9ddbdb;
    border: 3px solid;
    border-color: #4f8080 #d0f8f4 #d0f8f4 #4f8080;
}

.toolbar svg {
    width: 28px;
    height: 28px;
    background: #000;
}

.toolbar .cream {
    background: #ffffc8;
    border-color: #98986c #d0d0a0 #d0d0a0 #98986c;
}

.symbols {
    display: flex;
    gap: 1px;
    height: 30px;
}

.symbols > .cell {
    width: 29px;
}

.symbols > .cell.name {
    width: 139px;
}

.symbols .entry {
    flex: 1;
}

.symbols svg {
    width: 16px;
    height: 16px;
}

/* ---------- drill tool manager ---------- */
.drill {
    left: 1151px;
    right: -16px;
    top: 168px;
    bottom: -30px;
    padding-left: 5px;
    background: linear-gradient(90deg, rgba(130, 160, 180, .6), rgba(10, 14, 20, .3) 140px, rgba(10, 14, 20, .3) 345px, rgba(125, 185, 225, .7) 365px);
    font-size: 15px;
    line-height: 15px;
}

.drill .content {
    flex: 1;
    min-height: 0;
}

.drill .titlebar h2 {
    background: rgba(190, 190, 190, .6);
    box-shadow: 0 0 8px 5px rgba(190, 190, 190, .6);
}

.win-buttons {
    align-self: flex-start;
    display: flex;
    margin-left: auto;
    border: 1px solid #e0ecf4;
    border-top: 0;
    border-radius: 0 0 5px 5px;
    overflow: hidden;
}

.win-buttons button {
    width: 28px;
    height: 18px;
    background: linear-gradient(#d0dce4 50%, #8ca4b4 50%);
    border-right: 1px solid #506878;
}

.win-buttons svg {
    width: 14px;
    height: 12px;
}

.win-buttons .quit {
    width: 42px;
    padding-left: 4px;
    background: linear-gradient(#e09488 50%, #c03c28 50%);
    fill: #fff;
    stroke: #733;
}

.form-row {
    display: flex;
    height: 33px;
}

.form-row + .form-row {
    height: 28px;
    margin-top: 1px;
}

.layer-label {
    width: 168px;
}

.layer-label .btn {
    justify-content: space-between;
    padding: 0 13px 0 2px;
}

.layer-entry {
    width: 109px;
}

.slots {
    display: flex;
    align-items: center;
    width: 187px;
    margin-left: 150px;
    padding: 2px;
    border: 1px solid #000;
    background: #9ddbdb;
}

.slots label {
    width: 67px;
    padding-left: 7px;
}

.option {
    position: relative;
    flex: 1;
    height: 100%;
}

.option select {
    appearance: none;
    width: 100%;
    height: 100%;
    padding-left: 4px;
    border: 2px solid;
    border-color: #c8f8f2 #4f8080 #4f8080 #c8f8f2;
}

.slots select {
    padding-left: 30px;
}

.option i {
    position: absolute;
    right: 7px;
    top: 50%;
    width: 12px;
    height: 7px;
    margin-top: -3px;
    border: 2px solid;
    border-color: #c8f8f2 #4f8080 #4f8080 #c8f8f2;
}

.thickness {
    display: flex;
    align-items: center;
    width: 308px;
    padding: 2px 2px 2px 1px;
    border: solid #000;
    border-width: 1px 1px 0 0;
    background: #9ddbdb;
}

.thickness label {
    width: 168px;
}

.thickness .field {
    width: 104px;
    margin-right: 3px;
}

.params {
    width: 176px;
}

.params .btn {
    justify-content: flex-start;
    padding-left: 2px;
}

.params-entry {
    width: 127px;
    margin-left: 3px;
}

.form-row + .form-row .field {
    padding-bottom: 4px;
}

.table-area {
    flex: 1;
    min-height: 0;
    overflow: hidden;
    border: 2px solid;
    border-color: #2d7360 #b0f0dc #b0f0dc #2d7360;
    padding-left: 2px;
}

.tools {
    table-layout: fixed;
    width: 760px;
    border-spacing: 0;
    border-left: 2px solid #000;
}

.c-mark { width: 27px; }
.c-tool { width: 68px; }
.c-count { width: 60px; }
.c-size { width: 83px; }
.c-type { width: 115px; }
.c-tol { width: 74px; }

.tools th {
    height: 36px;
    background: #b4ffff;
    border: solid #000;
    border-width: 1px 2px 1px 0;
}

.tools tbody::before {
    content: "";
    display: block;
    height: 2px;
}

.tools td {
    height: 33px;
    padding: 1px;
    border: solid #000;
    border-width: 0 2px 2px 0;
}

.tools tbody tr:first-child td {
    height: 35px;
    border-top-width: 2px;
}

.tools td .field {
    display: block;
    height: 28px;
    border-color: #9c9898 #c8c4c4 #c8c4c4 #9c9898;
    padding-bottom: 9px;
}

.tools .cream {
    background-color: #ffffc8;
}

.tools .cream .field {
    border-color: #98986c #d0d0a0 #d0d0a0 #98986c;
}

.tools .focus {
    background: #000;
}

.tools .focus .field {
    background-color: #ffffc8;
}

.tools .option {
    height: 28px;
    padding: 0 1px 0 5px;
}

.tools select, .tools .option i {
    border-color: #e4e4b4 #98986c #98986c #d0d0a0;
}

.tools .num {
    text-align: right;
    padding-right: 4px;
}

.tools .tool {
    width: 63px;
    height: 27px;
    justify-content: flex-start;
    padding-left: 3px;
    background: #54cfaf;
    border-color: #a0ecd8 #2d7360 #2d7360 #a0ecd8;
}

.plus {
    display: block;
    width: 20px;
    height: 20px;
    margin: auto;
}

.hscroll.wide {
    height: 15px;
    margin: 4px 0 5px 2px;
}

.wide .thumb {
    flex: none;
    width: calc(100% - 88px);
}

.wide .right {
    margin-left: auto;
}

.footer {
    display: flex;
    gap: 2px;
    height: 28px;
    padding: 2px 0 0 2px;
    background: #000;
}

.footer span {
    background: #9ddbdb;
    border-top: 4px solid #c8f8f2;
    width: 29px;
}

.footer .f-orange { width: 40px; background: #ffc54c; border-color: #ffc54c; }
.footer .f-60 { width: 58px; }
.footer .f-34 { width: 33px; }
.footer .f-48 { width: 48px; }
.footer .f-gap { width: 59px; background: #54cfaf; border-color: #54cfaf; }
.footer .f-sunk { width: 60px; border-color: #4f8080; }
.footer .f-gap2 { width: 123px; background: #54cfaf; border-color: #54cfaf; }
.footer .f-86 { width: 86px; }
.footer .f-rest { flex: 1; }
```
